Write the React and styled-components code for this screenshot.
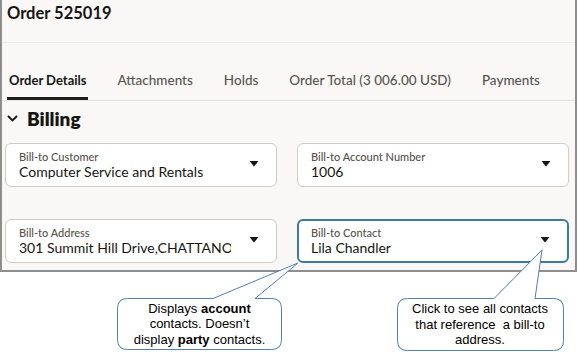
import React from 'react';
import styled, { createGlobalStyle } from 'styled-components';

const Global = createGlobalStyle`
  html, body {
    margin: 0;
    padding: 0;
    background: #ffffff;
  }
  * { box-sizing: border-box; }
`;

const Stage = styled.div`
  position: relative;
  width: 577px;
  height: 356px;
  font-family: Lato, "Noto Sans", sans-serif;
  color: #161513;
`;

const Frame = styled.div`
  width: 577px;
  height: 272px;
  background: #f9f8f6;
  border-left: 2px solid #8e8e8e;
  border-right: 2px solid #8e8e8e;
  border-bottom: 2px solid #8e8e8e;
  display: flex;
  flex-direction: column;
`;

const Header = styled.div`
  height: 43px;
  padding: 3px 0 0 5px;
  border-bottom: 1px solid #efedea;
  font-size: 16.5px;
  font-weight: 700;
  line-height: 20px;
`;

const TabBar = styled.div`
  height: 58px;
  display: flex;
  gap: 27px;
  padding-left: 5px;
  border-bottom: 1px solid #e6e4e0;
`;

const Tab = styled.div`
  position: relative;
  padding: 28px 2px 0;
  font-size: ${p => (p.$active ? '13px' : '13.5px')};
  line-height: 18px;
  font-weight: ${p => (p.$active ? 700 : 500)};
  color: ${p => (p.$active ? '#161513' : '#58544e')};
  white-space: nowrap;
  &::after {
    content: '';
    display: ${p => (p.$active ? 'block' : 'none')};
    position: absolute;
    left: 0;
    right: 0;
    bottom: 0;
    height: 3px;
    background: #1f1d1b;
  }
`;

const SectionHead = styled.div`
  display: flex;
  align-items: center;
  gap: 9px;
  padding: 5px 0 0 5px;
  height: 30px;
  font-size: 19px;
  line-height: 24px;
  font-weight: 800;
`;

const Grid = styled.div`
  display: grid;
  grid-template-columns: 272px 272px;
  column-gap: 20px;
  row-gap: 32px;
  padding: 12px 0 0 3px;
`;

const Field = styled.div`
  height: 44px;
  display: flex;
  align-items: center;
  background: #ffffff;
  border: ${p => (p.$focus ? '2px solid #3b7c98' : '1px solid #cfccc6')};
  border-radius: 6px;
  padding-left: ${p => (p.$focus ? '12px' : '13px')};
`;

const TextCol = styled.div`
  flex: 1;
  min-width: 0;
  overflow: hidden;
  align-self: flex-start;
  padding-top: ${p => (p.$focus ? '5px' : '6px')};
`;

const Label = styled.div`
  font-size: 11px;
  line-height: 13px;
  font-weight: 500;
  color: #57534d;
  white-space: nowrap;
`;

const Value = styled.div`
  font-size: 14px;
  line-height: 17px;
  color: #161513;
  white-space: nowrap;
  overflow: hidden;
`;

const CaretBox = styled.div`
  width: ${p => (p.$focus ? '44px' : '45px')};
  display: flex;
  justify-content: center;
  padding-bottom: 3px;
`;

const Overlay = styled.svg`
  position: absolute;
  left: 0;
  top: 0;
  pointer-events: none;
`;

const Note = styled.div`
  position: absolute;
  left: ${p => p.$x}px;
  top: ${p => p.$y}px;
  width: ${p => p.$w}px;
  height: ${p => p.$h}px;
  display: flex;
  align-items: center;
  justify-content: center;
  text-align: center;
  font-family: "Liberation Sans", Arial, sans-serif;
  font-size: 13px;
  line-height: 15.5px;
  color: #000000;
  b { font-weight: 700; }
`;

const Caret = () => (
  <svg width="10" height="6" viewBox="0 0 10 6">
    <path d="M0.5 0 L9.5 0 L5 5.5 Z" fill="#161513" />
  </svg>
);

const Chevron = () => (
  <svg width="11" height="7" viewBox="0 0 11 7">
    <path d="M1 1 L5.5 5.5 L10 1" fill="none" stroke="#161513" strokeWidth="1.8" />
  </svg>
);

const fields = [
  { label: 'Bill-to Customer', value: 'Computer Service and Rentals' },
  { label: 'Bill-to Account Number', value: '1006' },
  { label: 'Bill-to Address', value: '301 Summit Hill Drive,CHATTANOOGA, TN' },
  { label: 'Bill-to Contact', value: 'Lila Chandler', focus: true },
];

const tabs = ['Order Details', 'Attachments', 'Holds', 'Order Total (3 006.00 USD)', 'Payments'];

const bubble = (x1, y1, x2, y2, b1, b2, tx, ty) => {
  const r = 10;
  return `M${x1 + r},${y1} L${b1},${y1} L${tx},${ty} L${b2},${y1} L${x2 - r},${y1} Q${x2},${y1} ${x2},${y1 + r} L${x2},${y2 - r} Q${x2},${y2} ${x2 - r},${y2} L${x1 + r},${y2} Q${x1},${y2} ${x1},${y2 - r} L${x1},${y1 + r} Q${x1},${y1} ${x1 + r},${y1} Z`;
};

export default function App() {
  return (
    <Stage>
      <Global />
      <Frame>
        <Header>Order 525019</Header>
        <TabBar>
          {tabs.map((t, i) => (
            <Tab key={t} $active={i === 0}>{t}</Tab>
          ))}
        </TabBar>
        <SectionHead>
          <Chevron />
          <span>Billing</span>
        </SectionHead>
        <Grid>
          {fields.map(f => (
            <Field key={f.label} $focus={f.focus}>
              <TextCol $focus={f.focus}>
                <Label>{f.label}</Label>
                <Value>{f.value}</Value>
              </TextCol>
              <CaretBox $focus={f.focus}>
                <Caret />
              </CaretBox>
            </Field>
          ))}
        </Grid>
      </Frame>

      <Overlay width="577" height="356" viewBox="0 0 577 356">
        <path d={bubble(117.5, 298.5, 281.5, 349.5, 213, 255, 298, 263)} fill="#ffffff" stroke="#4f7fb3" strokeWidth="1" />
        <path d={bubble(397.5, 298.5, 563.5, 350.5, 494, 535, 542, 250)} fill="#ffffff" stroke="#4f7fb3" strokeWidth="1" />
      </Overlay>
      <Note $x={117} $y={298} $w={165} $h={52}>
        <div>
          Displays <b>account</b><br />
          contacts. Doesn’t<br />
          display <b>party</b> contacts.
        </div>
      </Note>
      <Note $x={397} $y={298} $w={166} $h={53}>
        <div>
          Click to see all contacts<br />
          that reference{'\u00a0'} a bill-to<br />
          address.
        </div>
      </Note>
    </Stage>
  );
}
